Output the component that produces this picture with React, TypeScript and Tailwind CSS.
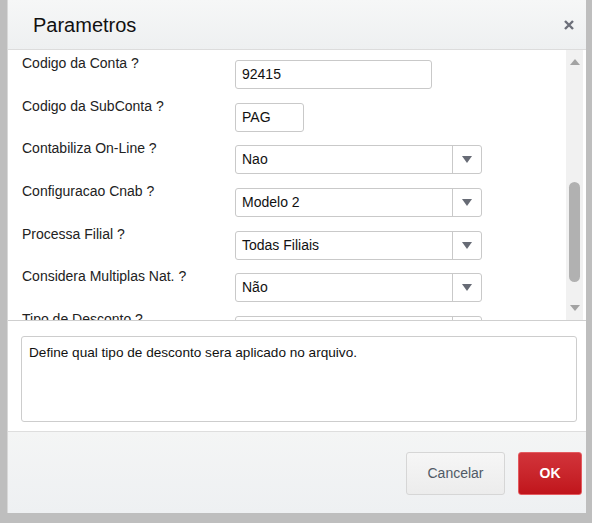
import React from "react";

type Field =
  | { label: string; kind: "input"; value: string; width: string }
  | { label: string; kind: "select"; value: string };

const fields: Field[] = [
  { label: "Codigo da Conta ?", kind: "input", value: "92415", width: "w-[197px]" },
  { label: "Codigo da SubConta ?", kind: "input", value: "PAG", width: "w-[69px]" },
  { label: "Contabiliza On-Line ?", kind: "select", value: "Nao" },
  { label: "Configuracao Cnab ?", kind: "select", value: "Modelo 2" },
  { label: "Processa Filial ?", kind: "select", value: "Todas Filiais" },
  { label: "Considera Multiplas Nat. ?", kind: "select", value: "Não" },
  { label: "Tipo de Desconto ?", kind: "select", value: "" },
];

const Arrow = ({ up }: { up?: boolean }) => (
  <svg width="10" height="6" viewBox="0 0 10 6">
    <path d={up ? "M0 6 L5 0 L10 6 Z" : "M0 0 L10 0 L5 6 Z"} fill="#a3a3a3" />
  </svg>
);

const Row = ({ field }: { field: Field }) => (
  <div className="flex items-start h-[42.65px] shrink-0">
    <div className="w-[213px] shrink-0 text-[14px] leading-[20px] text-[#222]">{field.label}</div>
    {field.kind === "input" ? (
      <div
        className={`${field.width} mt-[7px] h-[29px] border border-[#c9c9c9] rounded-[3px] bg-white flex items-center px-[6px] text-[14px] text-[#111]`}
      >
        {field.value}
      </div>
    ) : (
      <div className="w-[247px] mt-[7px] h-[29px] border border-[#c9c9c9] rounded-[3px] bg-white flex items-center text-[14px] text-[#111]">
        <div className="flex-1 px-[6px]">{field.value}</div>
        <div className="w-[29px] h-full border-l border-[#c9c9c9] flex items-center justify-center">
          <svg width="10" height="7" viewBox="0 0 10 7">
            <path d="M0 0 L10 0 L5 7 Z" fill="#676b75" />
          </svg>
        </div>
      </div>
    )}
  </div>
);

export default function App() {
  return (
    <div
      className="w-[592px] h-[523px] bg-[#bebebe] pl-[7px] pr-[6px] pb-[10px]"
      style={{ fontFamily: '"Liberation Sans", Arial, sans-serif' }}
    >
      <div className="h-full flex flex-col bg-white border-l border-[#d8d8d8]">
        <div className="h-[50px] shrink-0 flex items-center justify-between pl-[25px] pr-[12px] bg-gradient-to-b from-[#f6f7f7] to-[#eef0f1] border-b border-[#dcdcdc]">
          <span className="text-[20px] text-[#111]">Parametros</span>
          <svg width="10" height="10" viewBox="0 0 10 10">
            <path d="M1 1 L9 9 M9 1 L1 9" stroke="#6c6f79" strokeWidth="2.4" />
          </svg>
        </div>

        <div className="h-[271px] shrink-0 flex border-b border-[#cfcfcf]">
          <div className="flex-1 overflow-hidden pl-[14px] pt-[3px] flex flex-col">
            {fields.map((f) => (
              <Row key={f.label} field={f} />
            ))}
          </div>
          <div className="w-[17px] mr-[3px] bg-[#f1f1f1] flex flex-col items-center">
            <div className="h-[24px] flex items-center justify-center">
              <Arrow up />
            </div>
            <div className="flex-1 w-full px-[3px] pt-[108px] pb-[15px]">
              <div className="h-[100px] w-full rounded-full bg-[#b1b1b1]" />
            </div>
            <div className="h-[24px] flex items-center justify-center">
              <Arrow />
            </div>
          </div>
        </div>

        <div className="h-[110px] shrink-0 pt-[15px] pl-[13px] pr-[9px]">
          <div className="h-[86px] border border-[#cdcdcd] rounded-[3px] px-[7px] pt-[6px] text-[13.6px] text-[#111]">
            Define qual tipo de desconto sera aplicado no arquivo.
          </div>
        </div>

        <div className="flex-1 flex items-start justify-end gap-[13px] pt-[20px] pr-[4px] border-t border-[#dedede] bg-gradient-to-b from-[#f4f5f5] to-[#eef0f2]">
          <button className="w-[99px] h-[43px] rounded-[3px] border border-[#d6d6d6] bg-gradient-to-b from-[#f6f6f6] to-[#ececec] text-[14px] text-[#505a66]">
            Cancelar
          </button>
          <button className="w-[64px] h-[43px] rounded-[3px] border border-[#e45a5f] bg-gradient-to-b from-[#d2333a] to-[#c0141b] text-[14px] font-bold text-white">
            OK
          </button>
        </div>
      </div>
    </div>
  );
}
